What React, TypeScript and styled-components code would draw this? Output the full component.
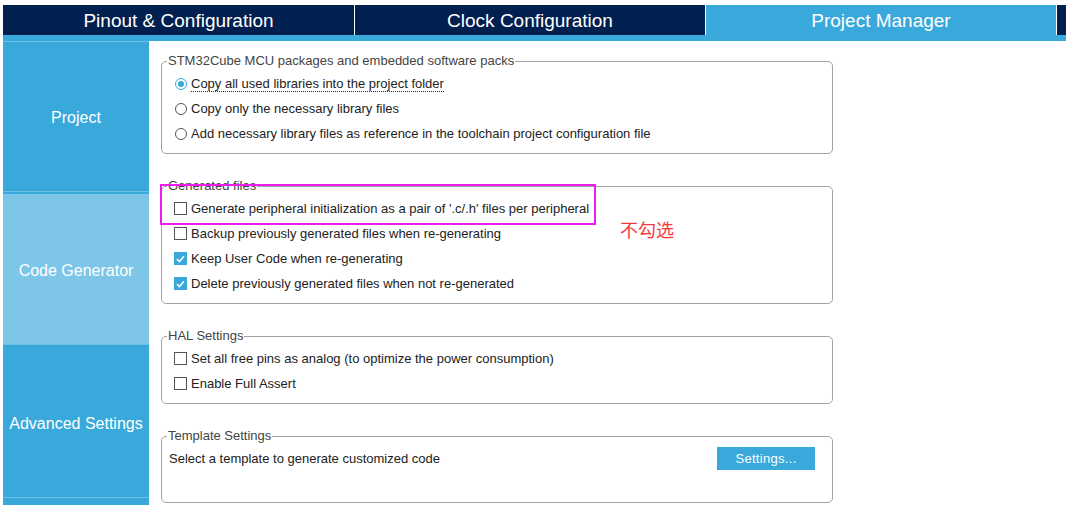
import React from 'react';
import styled, { createGlobalStyle } from 'styled-components';

const navy = '#02204f';
const blue = '#39a9db';
const paleBlue = '#7dc6e8';

const GlobalStyle = createGlobalStyle`
  html, body {
    margin: 0;
    padding: 0;
    background: #fff;
    font-family: "Liberation Sans", Arial, sans-serif;
  }
`;

const Page = styled.div`
  min-height: 100vh;
  padding: 5px 0 0 3px;
  box-sizing: border-box;
  display: flex;
  flex-direction: column;
`;

// top tabs
const TabBar = styled.div`
  display: flex;
  height: 30px;
  background: ${navy};
`;

const Tab = styled.div<{ $active?: boolean; $w: number }>`
  width: ${p => p.$w}px;
  box-sizing: border-box;
  flex: none;
  display: flex;
  align-items: center;
  justify-content: center;
  border-right: 1px solid #fff;
  background: ${p => (p.$active ? blue : navy)};
  color: #fff;
  font-size: 19px;
  padding-top: 1px;
`;

const Strip = styled.div`
  height: 6px;
  background: ${blue};
`;

const Body = styled.div`
  flex: 1;
  display: flex;
`;

// left navigation
const Sidebar = styled.div`
  width: 146px;
  flex: none;
  background: ${blue};
  display: flex;
  flex-direction: column;
`;

const SideItem = styled.div<{ $active?: boolean; $h: number }>`
  height: ${p => p.$h}px;
  box-sizing: border-box;
  border-top: 1px solid #6cc0e8;
  padding-top: ${p => (p.$active ? 2 : 0)}px;
  display: flex;
`;

const SideLabel = styled.div<{ $active?: boolean; $shift?: number }>`
  flex: 1;
  display: flex;
  align-items: center;
  justify-content: center;
  background: ${p => (p.$active ? paleBlue : blue)};
  color: #fff;
  font-size: 16px;
  padding-top: ${p => p.$shift ?? 0}px;
`;

// main content
const Main = styled.div`
  position: relative;
  flex: 1;
  padding: 13px 0 0 12px;
`;

const Group = styled.fieldset<{ $minH?: number }>`
  width: 672px;
  box-sizing: border-box;
  margin: 0 0 25px;
  padding: 3px 12px 7px 13px;
  border: 1px solid #a3a3a3;
  border-radius: 5px;
  min-width: 0;
  min-height: ${p => p.$minH ?? 0}px;
`;

const Legend = styled.legend`
  margin-left: -8px;
  padding: 0 1px;
  font-size: 13px;
  line-height: 14px;
  color: #444;
`;

const Row = styled.div`
  height: 25px;
  display: flex;
  align-items: center;
  gap: 4px;
  font-size: 13px;
  color: #222;
`;

const TemplateRow = styled(Row)`
  justify-content: space-between;
  margin-left: -6px;
  padding-right: 5px;
`;

const Label = styled.span<{ $focus?: boolean }>`
  line-height: 15px;
  border-bottom: 1px dotted ${p => (p.$focus ? '#222' : 'transparent')};
  padding-top: 1px;
`;

const RadioBox = styled.span<{ $on?: boolean }>`
  width: 12px;
  height: 12px;
  box-sizing: border-box;
  border-radius: 50%;
  border: 1px solid ${p => (p.$on ? blue : '#555')};
  display: flex;
  align-items: center;
  justify-content: center;
  flex: none;
  &::after {
    content: '';
    width: 6px;
    height: 6px;
    border-radius: 50%;
    background: ${p => (p.$on ? blue : 'transparent')};
  }
`;

const CheckBox = styled.span<{ $on?: boolean }>`
  width: 13px;
  height: 13px;
  box-sizing: border-box;
  margin-left: -1px;
  border: 1px solid ${p => (p.$on ? blue : '#555')};
  background: ${p => (p.$on ? blue : '#fff')};
  display: flex;
  align-items: center;
  justify-content: center;
  flex: none;
`;

const Button = styled.div`
  width: 98px;
  height: 23px;
  background: ${blue};
  color: #fff;
  font-size: 13px;
  display: flex;
  align-items: center;
  justify-content: center;
  letter-spacing: 0.3px;
`;

// annotation overlays
const Highlight = styled.div`
  position: absolute;
  left: 11px;
  top: 143px;
  width: 436px;
  height: 41px;
  box-sizing: border-box;
  border: 2px solid #ec1eec;
`;

const Note = styled.div`
  position: absolute;
  left: 471px;
  top: 178px;
  font-size: 18px;
  line-height: 20px;
  color: #f63a3a;
  font-family: "Noto Sans CJK SC", sans-serif;
`;

const Radio = ({ on, focus, children }: { on?: boolean; focus?: boolean; children: React.ReactNode }) => (
  <Row>
    <RadioBox $on={on} />
    <Label $focus={focus}>{children}</Label>
  </Row>
);

const Check = ({ on, children }: { on?: boolean; children: React.ReactNode }) => (
  <Row>
    <CheckBox $on={on}>
      {on && (
        <svg width="9" height="8" viewBox="0 0 9 8">
          <path d="M1 4.2 L3.5 6.5 L8 1.3" fill="none" stroke="#fff" strokeWidth="1.6" />
        </svg>
      )}
    </CheckBox>
    <Label>{children}</Label>
  </Row>
);

export default function App() {
  return (
    <Page>
      <GlobalStyle />
      <TabBar>
        <Tab $w={352}>Pinout &amp; Configuration</Tab>
        <Tab $w={351}>Clock Configuration</Tab>
        <Tab $w={351} $active>Project Manager</Tab>
      </TabBar>
      <Strip />
      <Body>
        <Sidebar>
          <SideItem $h={150}><SideLabel $shift={2}>Project</SideLabel></SideItem>
          <SideItem $h={153} $active><SideLabel $active $shift={4}>Code Generator</SideLabel></SideItem>
          <SideItem $h={153}><SideLabel $shift={5}>Advanced Settings</SideLabel></SideItem>
          <SideItem $h={10}><SideLabel /></SideItem>
        </Sidebar>
        <Main>
          <Group>
            <Legend>STM32Cube MCU packages and embedded software packs</Legend>
            <Radio on focus>Copy all used libraries into the project folder</Radio>
            <Radio>Copy only the necessary library files</Radio>
            <Radio>Add necessary library files as reference in the toolchain project configuration file</Radio>
          </Group>
          <Group>
            <Legend>Generated files</Legend>
            <Check>Generate peripheral initialization as a pair of '.c/.h' files per peripheral</Check>
            <Check>Backup previously generated files when re-generating</Check>
            <Check on>Keep User Code when re-generating</Check>
            <Check on>Delete previously generated files when not re-generated</Check>
          </Group>
          <Group>
            <Legend>HAL Settings</Legend>
            <Check>Set all free pins as analog (to optimize the power consumption)</Check>
            <Check>Enable Full Assert</Check>
          </Group>
          <Group $minH={74}>
            <Legend>Template Settings</Legend>
            <TemplateRow>
              <Label>Select a template to generate customized code</Label>
              <Button>Settings...</Button>
            </TemplateRow>
          </Group>
          <Highlight />
          <Note>不勾选</Note>
        </Main>
      </Body>
    </Page>
  );
}
